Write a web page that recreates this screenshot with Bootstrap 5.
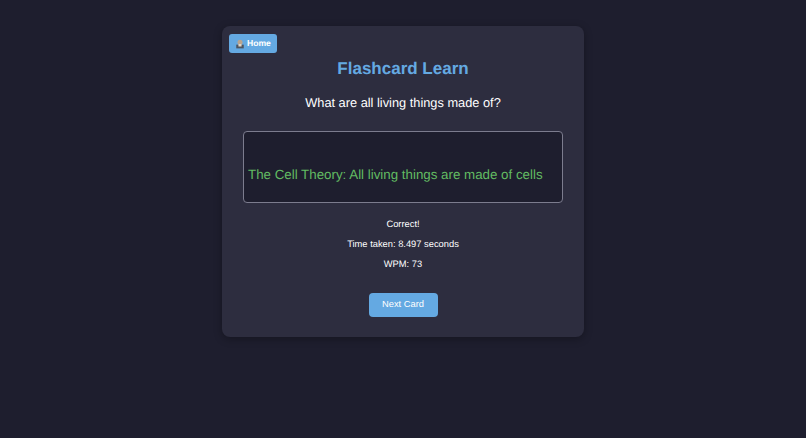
<!doctype html>
<html lang="en">
<head>
<meta charset="utf-8">
<title>Flashcard Learn</title>
<link rel="stylesheet" href="https://cdn.jsdelivr.net/npm/bootstrap@5.3.0/dist/css/bootstrap.min.css">
<style>
html, body { height: 100%; }
body { background: #1e1e2e; font-family: "Liberation Sans", Arial, sans-serif; color: #fff; overflow: hidden; text-rendering: geometricPrecision; }
.stage { padding-top: 26px; }
.flash-panel { width: 362px; height: 311px; background: #2d2d3f; border-radius: 8px; box-shadow: 0 2px 8px rgba(0,0,0,.3); padding: 8px 7px 0; }
.home-link { width: 48px; height: 19px; gap: 2px; padding-left: 6px; background: #64a9e2; color: #fff; font-size: 8.6px; font-weight: 700; border-radius: 3px; text-decoration: none; }
.house { width: 10px; height: 10px; flex: none; }
.flash-title { color: #64a9e2; font-size: 17px; font-weight: 700; line-height: 20px; margin: 6px 0 0; text-align: center; }
.flash-question { font-size: 12.8px; line-height: 16px; margin: 16px 0 0; text-align: center; }
.answer-box { width: 320px; height: 72px; margin: 20px auto 0; background: #1e1e2e; border: 1px solid #7c7c8e; border-radius: 4px; color: #62bb62; font-size: 13.33px; line-height: 16px; padding: 35px 4px 0; white-space: nowrap; }
.result-lines { margin-top: 15px; font-size: 9.33px; line-height: 12px; text-align: center; gap: 8px; }
.next-btn { width: 69px; height: 24px; padding: 0; margin-top: 23px; background: #64a9e2; border: 0; border-radius: 4px; color: #fff; font-size: 9.33px; }
.next-btn:hover { background: #64a9e2; color: #fff; }
</style>
</head>
<body>
<div class="stage d-flex justify-content-center">
  <div class="flash-panel">
    <a class="home-link d-flex align-items-center" href="#"><svg class="house" viewBox="0 0 16 16"><circle cx="8" cy="5" r="4" fill="#b9a48f"/><path d="M2 15V9h12v6z" fill="#4d5560"/><rect x="5.5" y="8" width="5" height="4" fill="#e4d5c2"/></svg>Home</a>
    <h1 class="flash-title">Flashcard Learn</h1>
    <p class="flash-question">What are all living things made of?</p>
    <div class="answer-box">The Cell Theory: All living things are made of cells</div>
    <div class="result-lines d-flex flex-column">
      <div>Correct!</div>
      <div>Time taken: 8.497 seconds</div>
      <div>WPM: 73</div>
    </div>
    <div class="text-center"><button class="btn next-btn" type="button">Next Card</button></div>
  </div>
</div>
<script src="https://cdn.jsdelivr.net/npm/bootstrap@5.3.0/dist/js/bootstrap.bundle.min.js"></script>
</body>
</html>
